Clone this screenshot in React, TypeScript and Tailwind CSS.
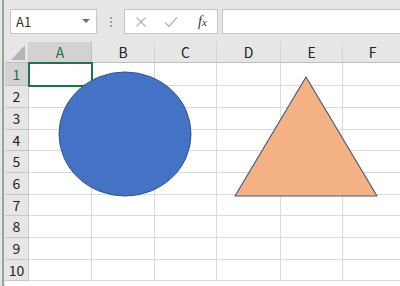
const cols = [
  { name: 'A', w: 63 },
  { name: 'B', w: 63 },
  { name: 'C', w: 62 },
  { name: 'D', w: 64 },
  { name: 'E', w: 62 },
  { name: 'F', w: 60 },
]

const rowHeights = [23, 22, 22, 21, 22, 22, 21, 22, 22, 21]

const font = { fontFamily: '"Noto Sans CJK JP", "Liberation Sans", sans-serif' }

export default function App() {
  return (
    <div className="relative flex h-[286px] w-[400px] overflow-hidden bg-white" style={font}>
      {/* left window edge */}
      <div className="flex w-[5px] shrink-0 bg-[#e6e6e6]">
        <div className="ml-[2px] w-[2px] bg-[#8fa898]" />
      </div>

      <div className="flex min-w-0 flex-1 flex-col">
        {/* formula bar */}
        <div className="flex h-[42px] shrink-0 items-start bg-[#e6e6e6] pt-[9px]">
          <div className="ml-[5px] flex h-[25px] w-[87px] items-center justify-between border border-[#c6c6c6] bg-white pl-[5px] pr-[6px]">
            <span className="text-[13px] text-[#333]">A1</span>
            <svg width="8" height="5" viewBox="0 0 8 5">
              <path d="M0 0 L8 0 L4 4 Z" fill="#707070" />
            </svg>
          </div>
          <div className="flex w-[27px] flex-col items-center gap-[2px] pt-[8px]">
            <span className="h-[2px] w-[2px] bg-[#a0a0a0]" />
            <span className="h-[2px] w-[2px] bg-[#a0a0a0]" />
            <span className="h-[2px] w-[2px] bg-[#a0a0a0]" />
          </div>
          <div className="flex h-[25px] w-[94px] items-center border border-[#c6c6c6] bg-white">
            <svg width="12" height="12" viewBox="0 0 12 12" className="ml-[10px]">
              <path d="M1.5 1.5 L10.5 10.5 M10.5 1.5 L1.5 10.5" stroke="#b4b4b4" strokeWidth="1.2" />
            </svg>
            <svg width="14" height="12" viewBox="0 0 14 12" className="ml-[17px]">
              <path d="M1 6.5 L5 10.5 L13 1.5" stroke="#b4b4b4" strokeWidth="1.3" fill="none" />
            </svg>
            <span
              className="ml-[20px] text-[14px] italic text-[#333]"
              style={{ fontFamily: '"Liberation Serif", serif' }}
            >
              f<span className="text-[11px]">x</span>
            </span>
          </div>
          <div className="ml-[4px] h-[25px] flex-1 border border-r-0 border-[#c6c6c6] bg-white" />
        </div>

        {/* grid */}
        <div className="flex flex-col">
          <div className="flex h-[21px] border-b border-[#bdbdbd] bg-[#e6e6e6]">
            <div className="relative w-[24px] shrink-0 border-r border-[#d0d0d0]">
              <svg width="14" height="15" viewBox="0 0 14 15" className="absolute bottom-[2px] right-[3px]">
                <path d="M14 0 L14 15 L0 15 Z" fill="#b5b5b5" />
              </svg>
            </div>
            {cols.map((c, i) => (
              <div
                key={c.name}
                style={{ width: c.w }}
                className={
                  i === 0
                    ? 'flex shrink-0 items-center justify-center border-r border-[#c0c0c0] bg-[#d2d2d2] text-[14px] text-[#217346]'
                    : 'flex shrink-0 items-center justify-center border-r border-[#d4d4d4] text-[14px] text-[#222]'
                }
              >
                {c.name}
              </div>
            ))}
          </div>

          {rowHeights.map((h, r) => (
            <div key={r} className="flex" style={{ height: h }}>
              <div
                className={
                  r === 0
                    ? 'flex w-[24px] shrink-0 items-center justify-center border-b border-r border-[#c0c0c0] bg-[#d2d2d2] text-[14px] text-[#217346]'
                    : 'flex w-[24px] shrink-0 items-center justify-center border-b border-r border-[#c8c8c8] bg-[#e6e6e6] text-[14px] text-[#222]'
                }
              >
                {r + 1}
              </div>
              {cols.map((c) => (
                <div key={c.name} style={{ width: c.w }} className="shrink-0 border-b border-r border-[#dadada]" />
              ))}
            </div>
          ))}
        </div>
      </div>

      {/* selected cell A1 */}
      <div className="absolute left-[28px] top-[62px] h-[25px] w-[65px] border-2 border-[#217346]" />

      {/* shapes */}
      <svg className="pointer-events-none absolute left-0 top-0" width="400" height="286" viewBox="0 0 400 286">
        <ellipse cx="125" cy="134" rx="66" ry="62" fill="#4472c4" stroke="#2f528f" strokeWidth="1" />
        <path d="M306 77 L377 196 L235 196 Z" fill="#f4b183" stroke="#4a5a80" strokeWidth="1.2" strokeLinejoin="round" />
      </svg>
    </div>
  )
}
